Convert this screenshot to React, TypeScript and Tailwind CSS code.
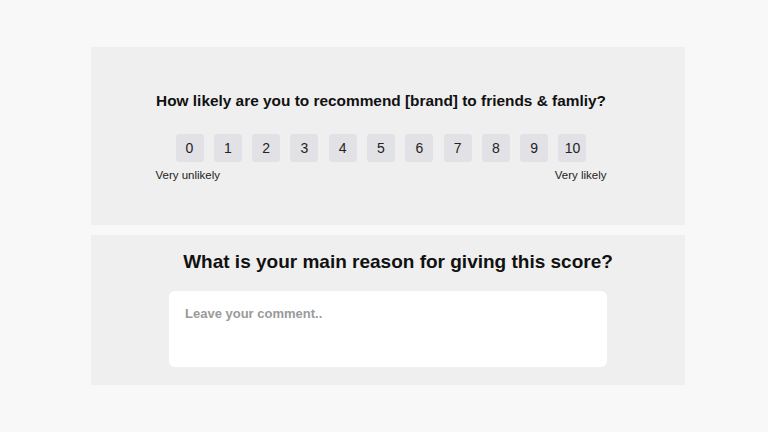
import React from 'react';

const scores = [0, 1, 2, 3, 4, 5, 6, 7, 8, 9, 10];

export default function App() {
  return (
    <div
      className="w-[768px] h-[432px] bg-[#f8f8f8] pt-[47px]"
      style={{ fontFamily: '"Liberation Sans", Arial, sans-serif' }}
    >
      <div className="w-[594px] ml-[91px] flex flex-col gap-[10px]">
        {/* Score section */}
        <div className="h-[178px] bg-[#efefef] flex flex-col items-center pt-[45px] pr-[14px]">
          <h2 className="text-[15.4px] font-bold text-[#111] leading-[18px]">
            How likely are you to recommend [brand] to friends &amp; famliy?
          </h2>
          <div className="flex gap-[10.3px] mt-[24px]">
            {scores.map((n) => (
              <button
                key={n}
                className="w-[28px] h-[28px] rounded-[3px] bg-[#e2e2e6] text-[14px] text-[#222] flex items-center justify-center"
              >
                {n}
              </button>
            ))}
          </div>
          <div className="w-[451px] flex justify-between mt-[6px] text-[11.5px] text-[#222] leading-[14px]">
            <span>Very unlikely</span>
            <span>Very likely</span>
          </div>
        </div>

        {/* Reason section */}
        <div className="h-[150px] bg-[#efefef] flex flex-col items-center pt-[16px]">
          <h2 className="text-[19px] font-bold text-[#111] leading-[22px] ml-[20px]">
            What is your main reason for giving this score?
          </h2>
          <div className="w-[438px] h-[76px] bg-white rounded-[6px] mt-[18px] px-[16px] pt-[10px]">
            <span className="text-[13px] font-bold text-[#9a9a9a]">Leave your comment..</span>
          </div>
        </div>
      </div>
    </div>
  );
}
